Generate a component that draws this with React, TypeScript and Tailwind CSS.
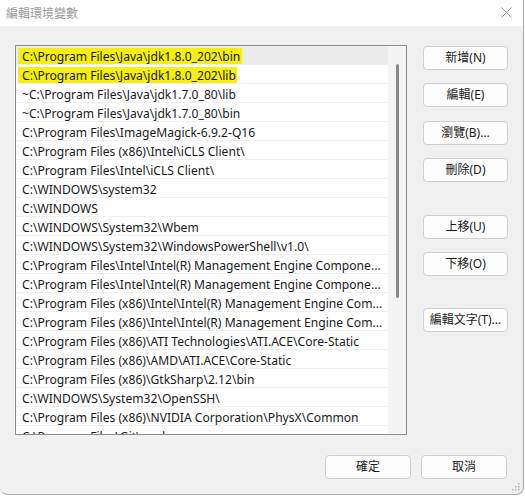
import React from "react";

const rows: string[] = [
  "C:\\Program Files\\Java\\jdk1.8.0_202\\bin",
  "C:\\Program Files\\Java\\jdk1.8.0_202\\lib",
  "~C:\\Program Files\\Java\\jdk1.7.0_80\\lib",
  "~C:\\Program Files\\Java\\jdk1.7.0_80\\bin",
  "C:\\Program Files\\ImageMagick-6.9.2-Q16",
  "C:\\Program Files (x86)\\Intel\\iCLS Client\\",
  "C:\\Program Files\\Intel\\iCLS Client\\",
  "C:\\WINDOWS\\system32",
  "C:\\WINDOWS",
  "C:\\WINDOWS\\System32\\Wbem",
  "C:\\WINDOWS\\System32\\WindowsPowerShell\\v1.0\\",
  "C:\\Program Files\\Intel\\Intel(R) Management Engine Compone...",
  "C:\\Program Files\\Intel\\Intel(R) Management Engine Compone...",
  "C:\\Program Files (x86)\\Intel\\Intel(R) Management Engine Com...",
  "C:\\Program Files (x86)\\Intel\\Intel(R) Management Engine Com...",
  "C:\\Program Files (x86)\\ATI Technologies\\ATI.ACE\\Core-Static",
  "C:\\Program Files (x86)\\AMD\\ATI.ACE\\Core-Static",
  "C:\\Program Files (x86)\\GtkSharp\\2.12\\bin",
  "C:\\WINDOWS\\System32\\OpenSSH\\",
  "C:\\Program Files (x86)\\NVIDIA Corporation\\PhysX\\Common",
  "C:\\Program Files\\Git\\cmd",
];

const font = "font-['Noto_Sans','Noto_Sans_CJK_TC',sans-serif]";

function Btn({ label, className = "" }: { label: string; className?: string }) {
  return (
    <div
      className={`h-[24px] w-[85px] rounded-[4px] border border-[#d0d0d0] bg-[#fdfdfd] flex items-center justify-center text-[12px] text-[#1b1b1b] ${className}`}
    >
      {label}
    </div>
  );
}

export default function App() {
  return (
    <div className={`w-[525px] h-[499px] bg-white ${font}`}>
      <div className="w-[524px] h-[495px] border-r border-b border-[#a8a8a8] rounded-b-[8px] bg-[#f0f0f0] flex flex-col overflow-hidden relative">
        {/* title bar */}
        <div className="h-[26px] bg-white flex items-center justify-between pl-[6px] pr-[11px] shrink-0">
          <span className="text-[12px] text-[#9a9a9a] font-['Noto_Sans_CJK_TC',sans-serif]">編輯環境變數</span>
          <svg width="11" height="11" viewBox="0 0 11 11" className="mt-[-2px]">
            <path d="M0.5 0.5 L10.5 10.5 M10.5 0.5 L0.5 10.5" stroke="#9a9a9a" strokeWidth="1" fill="none" />
          </svg>
        </div>

        {/* body */}
        <div className="flex pt-[19px] pl-[15px]">
          <div className="w-[392px] h-[390px] border border-[#8d8d8d] bg-white flex overflow-hidden">
            <div className="w-[372px] h-full overflow-hidden">
              {rows.map((r, i) => (
                <div
                  key={i}
                  className={`h-[19px] border-b border-[#efefef] pl-[6px] flex items-center text-[12.1px] text-[#1a1a1a] whitespace-nowrap relative ${i === 0 ? "bg-[#ececec]" : "bg-white"}`}
                >
                  {i < 2 && (
                    <div
                      className={`absolute left-[2px] top-[2px] h-[16px] bg-[#f4ee14] ${i === 0 ? "w-[224px]" : "w-[219px]"}`}
                    />
                  )}
                  <span className="relative top-[2px]">{r}</span>
                </div>
              ))}
            </div>
            <div className="flex-1 bg-[#f4f4f4] relative">
              <div className="absolute left-[8px] top-[18px] w-[3px] h-[234px] rounded-full bg-[#8a8a8a]" />
            </div>
          </div>

          <div className="ml-[16px] mt-[1px] flex flex-col">
            <Btn label="新增(N)" />
            <Btn label="編輯(E)" className="mt-[13px]" />
            <Btn label="瀏覽(B)..." className="mt-[14px]" />
            <Btn label="刪除(D)" className="mt-[13px]" />
            <Btn label="上移(U)" className="mt-[33px]" />
            <Btn label="下移(O)" className="mt-[13px]" />
            <Btn label="編輯文字(T)..." className="mt-[32px]" />
          </div>
        </div>

        {/* footer */}
        <div className="flex justify-end pr-[16px] mt-[20px] gap-[10px]">
          <Btn label="確定" className="w-[86px]" />
          <Btn label="取消" className="w-[86px]" />
        </div>

        {/* resize grip */}
        <svg width="8" height="8" viewBox="0 0 8 8" className="absolute right-[3px] bottom-[3px]">
          <rect x="6" y="0" width="1.5" height="1.5" fill="#b5b5b5" />
          <rect x="3" y="3" width="1.5" height="1.5" fill="#b5b5b5" />
          <rect x="6" y="3" width="1.5" height="1.5" fill="#b5b5b5" />
          <rect x="0" y="6" width="1.5" height="1.5" fill="#b5b5b5" />
          <rect x="3" y="6" width="1.5" height="1.5" fill="#b5b5b5" />
          <rect x="6" y="6" width="1.5" height="1.5" fill="#b5b5b5" />
        </svg>
      </div>
    </div>
  );
}
